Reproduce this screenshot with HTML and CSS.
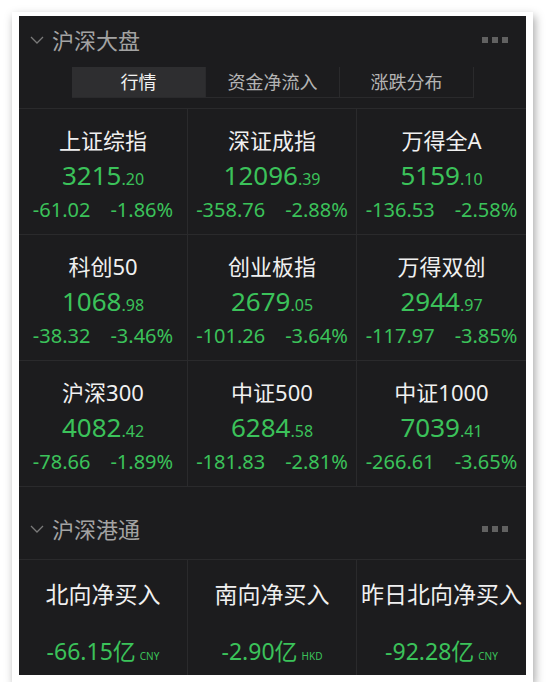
FILE: index.html
```html
<!DOCTYPE html>
<html lang="zh">
<head>
    <meta charset="UTF-8">
    <meta name="viewport" content="width=device-width, initial-scale=1.0">
    <title>沪深大盘</title>
    <link rel="stylesheet" href="styles.css">
</head>
<body>
    <div class="frame">
        <div class="panel">
            <div class="section-head">
                <svg class="chevron" width="14" height="8" viewBox="0 0 14 8"><polyline points="1,1 7,7 13,1" fill="none" stroke="#7a7a7a" stroke-width="1.3"/></svg>
                <span class="section-title">沪深大盘</span>
                <span class="dots"><i></i><i></i><i></i></span>
            </div>
            <div class="tabs">
                <div class="tab active">行情</div>
                <div class="tab">资金净流入</div>
                <div class="tab">涨跌分布</div>
            </div>
            <div class="grid index-grid">
                <div class="cell">
                    <div class="name">上证综指</div>
                    <div class="price">3215<small>.20</small></div>
                    <div class="change"><span>-61.02</span><span>-1.86%</span></div>
                </div>
                <div class="cell">
                    <div class="name">深证成指</div>
                    <div class="price">12096<small>.39</small></div>
                    <div class="change"><span>-358.76</span><span>-2.88%</span></div>
                </div>
                <div class="cell">
                    <div class="name">万得全A</div>
                    <div class="price">5159<small>.10</small></div>
                    <div class="change"><span>-136.53</span><span>-2.58%</span></div>
                </div>
                <div class="cell">
                    <div class="name">科创50</div>
                    <div class="price">1068<small>.98</small></div>
                    <div class="change"><span>-38.32</span><span>-3.46%</span></div>
                </div>
                <div class="cell">
                    <div class="name">创业板指</div>
                    <div class="price">2679<small>.05</small></div>
                    <div class="change"><span>-101.26</span><span>-3.64%</span></div>
                </div>
                <div class="cell">
                    <div class="name">万得双创</div>
                    <div class="price">2944<small>.97</small></div>
                    <div class="change"><span>-117.97</span><span>-3.85%</span></div>
                </div>
                <div class="cell">
                    <div class="name">沪深300</div>
                    <div class="price">4082<small>.42</small></div>
                    <div class="change"><span>-78.66</span><span>-1.89%</span></div>
                </div>
                <div class="cell">
                    <div class="name">中证500</div>
                    <div class="price">6284<small>.58</small></div>
                    <div class="change"><span>-181.83</span><span>-2.81%</span></div>
                </div>
                <div class="cell">
                    <div class="name">中证1000</div>
                    <div class="price">7039<small>.41</small></div>
                    <div class="change"><span>-266.61</span><span>-3.65%</span></div>
                </div>
            </div>

            <div class="section-head second">
                <svg class="chevron" width="14" height="8" viewBox="0 0 14 8"><polyline points="1,1 7,7 13,1" fill="none" stroke="#7a7a7a" stroke-width="1.3"/></svg>
                <span class="section-title">沪深港通</span>
                <span class="dots"><i></i><i></i><i></i></span>
            </div>
            <div class="grid flow-grid">
                <div class="cell">
                    <div class="name">北向净买入</div>
                    <div class="amount">-66.15亿<small>CNY</small></div>
                </div>
                <div class="cell">
                    <div class="name">南向净买入</div>
                    <div class="amount">-2.90亿<small>HKD</small></div>
                </div>
                <div class="cell">
                    <div class="name">昨日北向净买入</div>
                    <div class="amount">-92.28亿<small>CNY</small></div>
                </div>
            </div>
        </div>
    </div>
</body>
</html>
```

FILE: styles.css
```css
body {
    margin: 0;
    background: #fff;
    font-family: "Noto Sans", "Noto Sans CJK SC", sans-serif;
}
.frame {
    margin: 12px 0 0 12px;
    width: 507px;
    padding: 4px 7px 7px 7px;
    background: #fff;
    box-shadow: 2px 4px 9px rgba(0, 0, 0, 0.35);
}
.panel {
    background: #1c1c1e;
    height: 659px;
    overflow: hidden;
}
.section-head {
    height: 48px;
    display: flex;
    align-items: center;
    padding: 0 18px 0 11px;
}
.section-head.second {
    height: 72px;
    align-items: flex-start;
    box-sizing: border-box;
    padding-top: 28px;
}
.section-head.second .chevron {
    margin-top: 10px;
}
.chevron {
    margin-right: 8px;
}
.section-title {
    color: #a3a3a3;
    font-size: 22px;
    line-height: 28px;
}
.dots {
    margin-left: auto;
    display: flex;
    gap: 4px;
}
.section-head.second .dots {
    margin-top: 11px;
}
.dots i {
    width: 6px;
    height: 6px;
    background: #616161;
}
.tabs {
    display: flex;
    margin: 3px 0 10px 53px;
    width: 402px;
    height: 30px;
    border-bottom: 1px solid #2a2a2c;
}
.tab {
    flex: 1;
    text-align: center;
    line-height: 30px;
    font-size: 18px;
    color: #b4b4b4;
    border-right: 1px solid #2a2a2c;
}
.tab.active {
    background: #2e2e30;
    color: #f2f2f2;
}
.grid {
    display: grid;
    grid-template-columns: repeat(3, 1fr);
    border-top: 1px solid #2a2a2c;
}
.cell {
    display: flex;
    flex-direction: column;
    align-items: center;
    border-right: 1px solid #2a2a2c;
    border-bottom: 1px solid #2a2a2c;
}
.cell:nth-child(3n) {
    border-right: none;
}
.index-grid .cell {
    height: 126px;
    box-sizing: border-box;
    padding-top: 17px;
}
.name {
    color: #f0f0f0;
    font-size: 22px;
    line-height: 28px;
}
.price {
    margin-top: 5px;
    color: #3bc25a;
    font-size: 26px;
    line-height: 32px;
}
.price small {
    font-size: 16px;
}
.change {
    margin-top: 2px;
    display: flex;
    gap: 20px;
    color: #3bc25a;
    font-size: 20px;
    line-height: 26px;
}
.flow-grid .cell {
    height: 117px;
    box-sizing: border-box;
    padding-top: 20px;
    border-bottom: none;
}
.flow-grid .name {
    font-size: 23px;
}
.amount {
    margin-top: 29px;
    color: #3bc25a;
    font-size: 23px;
    line-height: 28px;
}
.amount small {
    font-size: 10px;
    margin-left: 4px;
}
```
